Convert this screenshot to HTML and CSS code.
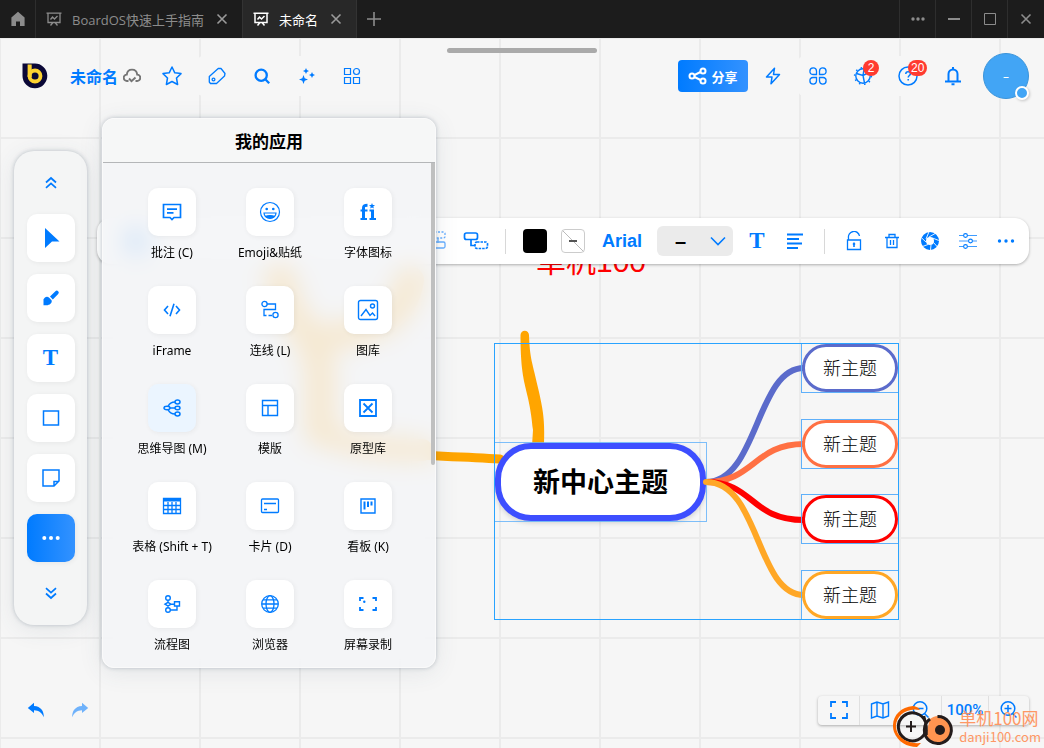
FILE: index.html
```html
<!DOCTYPE html>
<html lang="zh-CN">
<head>
<meta charset="utf-8">
<title>未命名 - BoardOS</title>
<meta name="viewport" content="width=device-width, initial-scale=1">
<link rel="stylesheet" href="styles.css">
</head>
<body>
<div class="app">

  <!-- Free canvas: strokes, mind map, text -->
  <div class="board">
    <svg class="strokes" fill="none" stroke-linecap="round">
      <g class="pen">
        <path d="M345 448C390 456 440 455 500 459" stroke-width="9"/>
        <path d="M410 280C404 318 375 330 326 338" stroke-width="28"/>
        <path d="M280 278C290 335 324 330 320 390V432" stroke-width="30"/>
        <path d="M320 434Q360 450 422 450" stroke-width="22"/>
        <path class="pen-taper" d="M520.500 335C520.500 390 529 385 533 430L532 446H544C545 420 543 410 539 392C532 360 530 360 529 335A4.200 4.200 0 0 0 520.500 335Z"/>
      </g>
      <g class="branches" stroke-width="6">
        <path d="M706 482C758 482 756 368 804 368" stroke="#5b6bcb"/>
        <path d="M706 482C754 482 754 444 804 444" stroke="#ff7043"/>
        <path d="M706 482C754 482 750 520 804 520" stroke="#ff0000"/>
        <path d="M706 482C760 482 756 595 804 595" stroke="#ffa726"/>
      </g>
    </svg>
    <p class="board-text">单机100</p>
    <div class="node node-root">新中心主题</div>
    <div class="node node-child n1">新主题</div>
    <div class="node node-child n2">新主题</div>
    <div class="node node-child n3">新主题</div>
    <div class="node node-child n4">新主题</div>
    <svg class="strokes joint"><circle cx="706" cy="482" r="3" fill="#ffa726"/></svg>
    <div class="selection"></div>
  </div>

  <header class="titlebar">
    <button class="home" aria-label="主页"><svg width="16" height="16" viewBox="0 0 16 16" fill="currentColor"><path d="M8 .8 14.600 6.500V15H10V10.500H6V15H1.400V6.500Z"/></svg></button>
    <div class="tab">
      <button class="tab-name"><svg width="16" height="16" viewBox="0 0 16 16" fill="none" stroke="currentColor" stroke-width="1.300"><path d="M.5 2.200H15.500M2 2.200V11.500H14V2.200M4.500 14.500 7 11.500M11.500 14.500 9 11.500M4.500 8.500 6.500 6 8.500 8 11.500 5"/></svg>BoardOS快速上手指南</button>
      <button class="close" aria-label="关闭"><svg width="12" height="12" viewBox="0 0 12 12" stroke="currentColor" stroke-width="1.600"><path d="M1.500 1.500 10.500 10.500M10.500 1.500 1.500 10.500"/></svg></button>
    </div>
    <div class="tab tab-active">
      <button class="tab-name"><svg width="16" height="16" viewBox="0 0 16 16" fill="none" stroke="currentColor" stroke-width="1.500"><path d="M.5 2.200H15.500M2 2.200V11.500H14V2.200M4.500 14.500 7 11.500M11.500 14.500 9 11.500M4.500 8.500 6.500 6 8.500 8 11.500 5"/></svg>未命名</button>
      <button class="close" aria-label="关闭"><svg width="12" height="12" viewBox="0 0 12 12" stroke="currentColor" stroke-width="1.600"><path d="M1.500 1.500 10.500 10.500M10.500 1.500 1.500 10.500"/></svg></button>
    </div>
    <button class="new-tab" aria-label="新标签页"><svg width="14" height="14" viewBox="0 0 14 14" stroke="currentColor" stroke-width="1.600"><path d="M7 0V14M0 7H14"/></svg></button>
    <div class="window-buttons">
      <button aria-label="更多"><svg width="14" height="4" viewBox="0 0 14 4" fill="currentColor"><circle cx="2" cy="2" r="1.700"/><circle cx="7" cy="2" r="1.700"/><circle cx="12" cy="2" r="1.700"/></svg></button>
      <button aria-label="最小化"><svg width="12" height="2" viewBox="0 0 12 2"><path d="M0 0H12V2H0Z" fill="currentColor"/></svg></button>
      <button aria-label="最大化"><svg width="14" height="14" viewBox="0 0 14 14" fill="none" stroke="currentColor"><path d="M1.500 1.500H12.500V12.500H1.500Z"/></svg></button>
      <button aria-label="关闭窗口"><svg width="12" height="12" viewBox="0 0 12 12" stroke="currentColor" stroke-width="1.600"><path d="M1.500 1.500 10.500 10.500M10.500 1.500 1.500 10.500"/></svg></button>
    </div>
  </header>

  <div class="workspace">
    <div class="drag-handle"></div>

    <!-- Format bar of the selected node -->
    <div class="format-bar">
      <button class="assist" aria-label="智能助手"><svg width="24" height="24" viewBox="0 0 24 24" fill="currentColor"><rect x="1" y="1" width="22" height="22" rx="6"/></svg></button>
      <button class="fade" aria-label="同级主题"><svg width="24" height="20" viewBox="0 0 24 20" fill="none" stroke="currentColor" stroke-width="1.300"><rect x="7" y="1" width="12" height="6" rx="1.500" stroke-dasharray="2 1.500"/><path d="M12 7V12"/><rect x="7" y="11" width="12" height="6" rx="1.500"/></svg></button>
      <button aria-label="子主题"><svg width="26" height="20" viewBox="0 0 26 20" fill="none" stroke="currentColor" stroke-width="1.700"><rect x="1.500" y="2" width="13" height="6.500" rx="2"/><path d="M8 8.500V14.500H12"/><rect x="12" y="11" width="12.500" height="6.500" rx="2" stroke-dasharray="2.500 1"/></svg></button>
      <span class="rule"></span>
      <button aria-label="文字颜色"><span class="swatch swatch-black"></span></button>
      <button aria-label="填充颜色"><span class="swatch swatch-none"></span></button>
      <button class="font-name">Arial</button>
      <span class="size-box"><select aria-label="字号"><option>–</option></select><svg width="16" height="10" viewBox="0 0 16 10" fill="none" stroke="currentColor" stroke-width="1.600"><path d="M1 1.500 8 8.500 15 1.500"/></svg></span>
      <button class="serif-t" aria-label="文字样式">T</button>
      <button aria-label="对齐"><svg width="18" height="16" viewBox="0 0 18 16" stroke="currentColor" stroke-width="1.800"><path d="M1 1.500H17M1 6H13M1 10.500H16M1 15H12"/></svg></button>
      <span class="rule"></span>
      <button aria-label="锁定"><svg width="18" height="20" viewBox="0 0 18 20" fill="none" stroke="currentColor" stroke-width="1.300"><path d="M2.500 9H15.500V18.500H2.500ZM3.500 9V7A5.500 5.500 0 0 1 14.500 5"/><path d="M9 11.500V16M7.800 13H10.200" stroke-width="1.600"/></svg></button>
      <button aria-label="删除"><svg width="16" height="18" viewBox="0 0 16 18" fill="none" stroke="currentColor" stroke-width="1.300"><path d="M1 5.500H15M5 5V2.500H11V5M3 5.500V15.500H13V5.500M6.500 8V13M9.500 8V13"/></svg></button>
      <button aria-label="快照"><svg width="20" height="20" viewBox="0 0 20 20"><circle cx="10" cy="10" r="6.500" fill="none" stroke="currentColor" stroke-width="5"/><path d="M6 8 9 .8M9 6 16 2M12.500 7 18.800 9.500M13.500 11.500 17.500 16M11 14 10.500 19M8 13.500 2.500 15.500M6 11 1.200 6.500" stroke="#fff" stroke-width=".9"/></svg></button>
      <button aria-label="调节"><svg width="18" height="16" viewBox="0 0 18 16" fill="#fff" stroke="currentColor" stroke-width="1.100"><path d="M0 2.500H18M0 8H18M0 13.500H18" opacity=".75"/><circle cx="6.500" cy="2.500" r="1.900"/><circle cx="11.500" cy="8" r="1.900"/><circle cx="6.500" cy="13.500" r="1.900"/></svg></button>
      <button aria-label="更多"><svg width="18" height="4" viewBox="0 0 18 4" fill="currentColor"><circle cx="2.500" cy="2" r="1.700"/><circle cx="9" cy="2" r="1.700"/><circle cx="15.500" cy="2" r="1.700"/></svg></button>
    </div>

    <nav class="topbar">
      <a class="logo" href="#" aria-label="BoardOS"><svg width="26" height="26" viewBox="0 0 26 26"><path d="M.5.5H12.500A12.400 12.400 0 1 1 .5 13Z" fill="#0b0837"/><circle cx="13" cy="13" r="5.500" fill="none" stroke="#fdd231" stroke-width="3.800"/><path d="M5.600 1.500H9.700V14H5.600Z" fill="#fdd231"/></svg></a>
      <button class="doc-name">未命名<svg width="18" height="16" viewBox="0 0 18 16" fill="none" stroke="#757575" stroke-width="1.900"><path d="M5.500 13H4A3.200 3.200 0 0 1 3.800 6.600C4.500 0 13.500 0 14.200 6.600A3.200 3.200 0 0 1 14 13H12.500M6 10.500 8.500 13.200 12.500 9.500"/></svg></button>
      <button class="tool" aria-label="收藏"><svg width="20" height="20" viewBox="0 0 20 20" fill="none" stroke="currentColor" stroke-width="1.500" stroke-linejoin="round"><path d="M10 1 12.800 6.800 19 7.600 14.500 12 15.600 18.500 10 15.500 4.400 18.500 5.500 12 1 7.600 7.200 6.800Z"/></svg></button>
      <button class="tool" aria-label="标签"><svg width="18" height="18" viewBox="0 0 18 18" fill="none" stroke="currentColor" stroke-width="1.300" stroke-linejoin="round"><path d="M10.500 1.300 13 1.500 17 6.500 16.500 9 8.500 16.500H2.500L1.300 15V9.500Z"/><circle cx="5.500" cy="12.500" r="1.400"/></svg></button>
      <button class="tool" aria-label="搜索"><svg width="18" height="18" viewBox="0 0 18 18" fill="none" stroke="currentColor" stroke-width="2.300"><circle cx="8.200" cy="8.200" r="5.600"/><path d="M12.500 12.500 16.200 16.200"/></svg></button>
      <button class="tool" aria-label="智能"><svg width="18" height="18" viewBox="0 0 18 18" fill="currentColor"><path d="M8 1 8.900 3.100 11 4 8.900 4.900 8 7 7.100 4.900 5 4 7.100 3.100ZM14 5 14.900 7.100 17 8 14.900 8.900 14 11 13.100 8.900 11 8 13.100 7.100ZM5.500 8 6.700 11.300 10 12.500 6.700 13.700 5.500 17 4.300 13.700 1 12.500 4.300 11.300Z"/></svg></button>
      <button class="tool" aria-label="组件"><svg width="18" height="18" viewBox="0 0 18 18" fill="none" stroke="currentColor" stroke-width="1.200"><path d="M1.500 1.500H7.500V7.500H1.500ZM1.500 10.500H7.500V16.500H1.500ZM10.500 10.500H16.500V16.500H10.500Z"/><circle cx="13.500" cy="4.500" r="3"/></svg></button>

      <button class="share"><svg width="20" height="18" viewBox="0 0 20 18" fill="none" stroke="currentColor" stroke-width="2"><circle cx="4" cy="9" r="2.500"/><circle cx="15" cy="4" r="2.500"/><circle cx="15" cy="14" r="2.500"/><path d="M6.500 8 12.500 5M6.500 10 12.500 13"/></svg>分享</button>
      <button class="tool" aria-label="闪电"><svg width="16" height="18" viewBox="0 0 16 18" fill="none" stroke="currentColor" stroke-width="1.500" stroke-linejoin="round"><path d="M9.500 1.200 1.500 10H7L6 16.800 14.500 7.500H8.500Z"/></svg></button>
      <button class="tool" aria-label="应用"><svg width="20" height="20" viewBox="0 0 20 20" fill="none" stroke="currentColor" stroke-width="1.300"><path d="M8.500 8.500H5A3.300 3.300 0 1 1 8.500 5ZM11.500 8.500H15A3.300 3.300 0 1 0 11.500 5ZM8.500 11.500H5A3.300 3.300 0 1 0 8.500 15ZM11.500 11.500H15A3.300 3.300 0 1 1 11.500 15Z"/></svg></button>
      <button class="tool" aria-label="任务"><svg width="20" height="20" viewBox="0 0 20 20" fill="none" stroke="currentColor" stroke-width="1.400"><circle cx="10" cy="10" r="7.200"/><circle cx="10" cy="10" r="8.400" stroke-dasharray="1.500 3.780" stroke-width="1.500"/><path d="M3.500 7.500 10 9.500 16 6.500M10 9.500 11.500 17M10 9.500 11 3"/></svg><span class="badge">2</span></button>
      <button class="tool" aria-label="帮助"><svg width="20" height="20" viewBox="0 0 20 20" fill="none" stroke="currentColor" stroke-width="1.500"><circle cx="10" cy="10" r="9"/><path d="M7.800 8C7.800 5 12.400 5.200 12.400 7.800C12.400 9.500 10.200 9.600 10.200 11.600M10.200 13V14.600"/></svg><span class="badge">20</span></button>
      <button class="tool" aria-label="通知"><svg width="18" height="20" viewBox="0 0 18 20" fill="none" stroke="currentColor" stroke-width="2"><path d="M9 1V3M4.500 15V8A4.500 4.500 0 0 1 13.500 8V15M1 15.500H17M7.500 18.200H10.500"/></svg></button>
      <button class="avatar">–<span class="presence"></span></button>
    </nav>

    <main class="middle">
      <aside class="dock">
        <button class="fold" aria-label="向上"><svg width="14" height="14" viewBox="0 0 14 14" fill="none" stroke="currentColor" stroke-width="1.700"><path d="M2 6.500 7 2 12 6.500M2 11.800 7 7.300 12 11.800"/></svg></button>
        <button class="tile" aria-label="选择"><svg width="20" height="22" viewBox="0 0 20 22" fill="currentColor"><path d="M4 1 18.500 14.500H11L4 21Z"/></svg></button>
        <button class="tile" aria-label="画笔"><svg width="18" height="18" viewBox="0 0 18 18" fill="currentColor"><path d="M8 7.600 13.400 2.300A1.900 1.900 0 0 1 16.200 5L10.800 10.400ZM1.500 16.200V12.500A3.600 3.600 0 0 1 7.200 8.700L9.600 11.200C10.500 14 7.500 16.200 4.500 16.200Z"/></svg></button>
        <button class="tile serif-t" aria-label="文字">T</button>
        <button class="tile" aria-label="形状"><svg width="18" height="18" viewBox="0 0 18 18" fill="none" stroke="currentColor" stroke-width="1.500"><path d="M1.500 2H16.500V16H1.500Z"/></svg></button>
        <button class="tile" aria-label="便签"><svg width="18" height="18" viewBox="0 0 18 18" fill="none" stroke="currentColor" stroke-width="1.500"><path d="M1 1H17V12L12 17H1ZM12 17V12.500H17"/></svg></button>
        <button class="tile tile-on" aria-label="更多"><svg width="18" height="4" viewBox="0 0 18 4" fill="currentColor"><circle cx="2.300" cy="2" r="2"/><circle cx="9" cy="2" r="2"/><circle cx="15.700" cy="2" r="2"/></svg></button>
        <button class="fold" aria-label="向下"><svg width="14" height="14" viewBox="0 0 14 14" fill="none" stroke="currentColor" stroke-width="1.700"><path d="M2 2.200 7 6.700 12 2.200M2 7.500 7 12 12 7.500"/></svg></button>
      </aside>

      <section class="panel">
        <h2>我的应用</h2>
        <div class="panel-scrollbar"></div>
        <div class="apps">
          <button class="app-item"><span class="tile"><svg width="20" height="20" viewBox="0 0 20 20" fill="none" stroke="currentColor" stroke-width="1.700"><path d="M1.500 2.500H18.500V15.500H12L10 17.500 8 15.500H1.500ZM5 7.200H15M5 10.800H11.500"/></svg></span>批注 (C)</button>
          <button class="app-item"><span class="tile"><svg width="22" height="22" viewBox="0 0 22 22" fill="none" stroke="currentColor" stroke-width="1.200"><circle cx="11" cy="11" r="9.500"/><circle cx="7.700" cy="8" r=".7" fill="currentColor"/><circle cx="14.300" cy="8" r=".7" fill="currentColor"/><path d="M5 12H17A6 5.500 0 0 1 5 12Z"/><path d="M6.500 15.200Q11 13.800 15.500 15.200Q14 17 11 17T6.500 15.200Z" fill="currentColor"/></svg></span>Emoji&amp;贴纸</button>
          <button class="app-item"><span class="tile"><svg width="18" height="20" viewBox="0 0 18 20" fill="none" stroke="currentColor" stroke-width="3"><path d="M4.500 17V6C4.500 3.500 6 3.300 8.500 3.300M13.500 17V8" /><path d="M1.500 8.500H8.500M1.500 17H8M10.500 8.500H15M10.500 17H17" stroke-width="1.800"/><path d="M13 1 13.800 2.900 16 3.100 14.300 4.500 14.900 6.500 13 5.400 11.200 6.500 11.700 4.500 10 3.100 12.200 2.900Z" fill="currentColor" stroke="none"/></svg></span>字体图标</button>

          <button class="app-item"><span class="tile"><svg width="18" height="14" viewBox="0 0 18 14" fill="none" stroke="currentColor" stroke-width="1.600"><path d="M5 3 1.500 7 5 11M13 3 16.500 7 13 11M11 .8 7 13.200"/></svg></span>iFrame</button>
          <button class="app-item"><span class="tile"><svg width="20" height="20" viewBox="0 0 20 20" fill="none" stroke="currentColor" stroke-width="1.300"><circle cx="4.500" cy="4" r="2.600"/><circle cx="15.500" cy="15" r="2.600"/><path d="M7 4H15.500V9.500H4V14"/><path d="M4 14V15.500H12" stroke-dasharray="4 2"/></svg></span>连线 (L)</button>
          <button class="app-item"><span class="tile"><svg width="22" height="22" viewBox="0 0 22 22" fill="none" stroke="currentColor" stroke-width="1.400"><rect x="1.500" y="1.500" width="19" height="19" rx="2"/><circle cx="15.500" cy="7" r="2"/><path d="M4 17 9 10.500 13 16.500 15.500 14 18 17"/></svg></span>图库</button>

          <button class="app-item"><span class="tile tile-tint"><svg width="20" height="20" viewBox="0 0 20 20" fill="none" stroke="currentColor" stroke-width="1.500"><ellipse cx="5" cy="10" rx="3" ry="1.700"/><ellipse cx="15.500" cy="4" rx="2.500" ry="1.900"/><ellipse cx="15.500" cy="10" rx="2.500" ry="1.700"/><ellipse cx="15.500" cy="16" rx="2.500" ry="1.900"/><path d="M8 10H13M6 8.500Q8 4 13 4M6 11.500Q8 16 13 16"/></svg></span>思维导图 (M)</button>
          <button class="app-item"><span class="tile"><svg width="20" height="20" viewBox="0 0 20 20" fill="none" stroke="currentColor" stroke-width="1.400"><path d="M2.500 2.500H17.500V17.500H2.500ZM2.500 7.500H17.500M8 7.500V17.500"/></svg></span>模版</button>
          <button class="app-item"><span class="tile"><svg width="20" height="20" viewBox="0 0 20 20" fill="none" stroke="currentColor" stroke-width="1.800"><path d="M2 2H18V18H2ZM5.500 5.500 14.500 14.500M14.500 5.500 5.500 14.500"/></svg></span>原型库</button>

          <button class="app-item"><span class="tile"><svg width="20" height="18" viewBox="0 0 20 18" fill="none" stroke="currentColor" stroke-width="1.300"><path d="M1.500 1.500H18.500V16.500H1.500ZM1.500 8.500H18.500M1.500 12.500H18.500M6 5V16M10 5V16M14 5V16"/><path d="M1.500 3H18.500" stroke-width="3"/></svg></span>表格 (Shift + T)</button>
          <button class="app-item"><span class="tile"><svg width="20" height="18" viewBox="0 0 20 18" fill="none" stroke="currentColor" stroke-width="1.300"><rect x="1.500" y="2" width="17" height="13.500" rx="1"/><path d="M4 6.500H16M4 12.500H7"/></svg></span>卡片 (D)</button>
          <button class="app-item"><span class="tile"><svg width="18" height="18" viewBox="0 0 18 18" fill="none" stroke="currentColor" stroke-width="1.400"><path d="M2 2H16V16H2Z"/><path d="M5.500 4.500V12.500M9 4.500V10M12.500 4.500V8.500" stroke-width="2"/></svg></span>看板 (K)</button>

          <button class="app-item"><span class="tile"><svg width="20" height="20" viewBox="0 0 20 20" fill="none" stroke="currentColor" stroke-width="1.400"><circle cx="6" cy="4" r="2.300"/><circle cx="6" cy="16" r="2.300"/><path d="M6 6.300V8.300M6 12V13.700M3 10.200 6 8.300 9 10.200 6 12ZM9 10.200H12.500M12.500 7.800H17.500V12H12.500ZM8.300 16H15V12"/></svg></span>流程图</button>
          <button class="app-item"><span class="tile"><svg width="20" height="20" viewBox="0 0 20 20" fill="none" stroke="currentColor" stroke-width="1.300"><circle cx="10" cy="10" r="8.300"/><ellipse cx="10" cy="10" rx="4" ry="8.300"/><path d="M2 10H18M3 5.800H17M3 14.200H17"/></svg></span>浏览器</button>
          <button class="app-item"><span class="tile"><svg width="20" height="18" viewBox="0 0 20 18" fill="none" stroke="currentColor" stroke-width="1.800"><path d="M2 6V3H5.500M14.500 3H18V6M18 12V15H14.500M5.500 15H2V12"/><circle cx="6.300" cy="6.800" r="1.200" fill="currentColor" stroke="none"/></svg></span>屏幕录制</button>
        </div>
      </section>
    </main>

    <footer class="bottombar">
      <div class="history">
        <button aria-label="撤销"><svg width="18" height="16" viewBox="0 0 18 16" fill="currentColor"><path d="M.8 6 7 .8V4C14 4.500 17 9 16.800 15.200C14.500 10.500 12 8.500 7 8.300V11Z"/></svg></button>
        <button aria-label="重做" disabled><svg width="18" height="16" viewBox="0 0 18 16" fill="currentColor"><path d="M17.200 6 11 .8V4C4 4.500 1 9 1.200 15.200C3.500 10.500 6 8.500 11 8.300V11Z"/></svg></button>
      </div>
      <div class="zoom">
        <button aria-label="全屏"><svg width="20" height="20" viewBox="0 0 20 20" fill="none" stroke="currentColor" stroke-width="1.800"><path d="M2 7V2H7M13 2H18V7M18 13V18H13M7 18H2V13"/></svg></button>
        <button aria-label="地图"><svg width="20" height="20" viewBox="0 0 20 20" fill="none" stroke="currentColor" stroke-width="1.400"><path d="M1.500 4 7 2 13 4 18.500 2V16L13 18 7 16 1.500 18ZM7 2V16M13 4V18"/></svg></button>
        <button aria-label="缩小"><svg width="20" height="20" viewBox="0 0 20 20" fill="none" stroke="currentColor" stroke-width="1.500"><circle cx="9" cy="8.500" r="6.800"/><path d="M5.500 8.500H12.500M13.500 13.500 17.500 17.500"/></svg></button>
        <button class="zoom-level">100%</button>
        <button aria-label="放大"><svg width="20" height="20" viewBox="0 0 20 20" fill="none" stroke="currentColor" stroke-width="1.500"><circle cx="9" cy="8.500" r="6.800"/><path d="M5.500 8.500H12.500M9 5V12M13.500 13.500 17.500 17.500"/></svg></button>
      </div>
    </footer>
  </div>

  <div class="watermark">
    <svg width="64" height="44" viewBox="0 0 64 44" fill="none">
      <path d="M36.500 16C40 11 49 11 54 15C61 21 60 32 53 37C46 42 36 39 33 31" fill="#ff9450"/>
      <path d="M44.500 12.500A13.500 13.500 0 1 1 37 15" stroke="#231c1c" stroke-width="3"/>
      <circle cx="47" cy="26" r="5" fill="#231c1c"/>
      <path d="M32.500 18A14 14 0 1 0 33 26" stroke="#231c1c" stroke-width="3"/>
      <path d="M31 12 33.500 23V31" stroke="#231c1c" stroke-width="2.500"/>
      <path d="M18 17V28M13 22.500H23" stroke="#231c1c" stroke-width="2"/>
      <path d="M20 2C5 3-3 16 1 28C5 38 14 43 24 43L28 39C16 40 6 35 3.500 26C1 15 9 6 22 5.500L27 6C25 3 22 2 20 2Z" fill="#ff6a00"/>
    </svg>
    <div class="watermark-text"><span>单机100网</span><span class="site">danji100.com</span></div>
  </div>
</div>
</body>
</html>
```
FILE: styles.css
```css
* { box-sizing: border-box; }

body {
  margin: 0;
  font-family: "Open Sans", "Noto Sans CJK SC", sans-serif;
  color: #000;
}

button, select {
  margin: 0;
  padding: 0;
  border: 0;
  background: none;
  font: inherit;
  color: inherit;
}

button {
  display: flex;
  align-items: center;
  justify-content: center;
}

svg { display: block; flex: none; }

.app {
  position: relative;
  display: flex;
  flex-direction: column;
  min-height: 100vh;
  overflow: hidden;
}

/* Title bar */
.titlebar {
  position: relative;
  display: flex;
  height: 38px;
  background: #1c1c1c;
  color: #8c8c8c;
  font-size: 13px;
}

.home { width: 36px; border-right: 1px solid #2e2e2e; }

.tab {
  display: flex;
  align-items: center;
  gap: 12px;
  padding: 0 14px 0 10px;
  border-right: 1px solid #333;
}

.tab-name { gap: 10px; }
.tab-active { background: #282828; color: #fff; }
.close { color: #9a9a9a; }
.new-tab { width: 34px; }
.window-buttons { display: flex; margin-left: auto; }
.window-buttons button { width: 36px; border-left: 1px solid #2e2e2e; }
.window-buttons button:last-child { width: 37px; }

/* Canvas */
.board {
  position: absolute;
  inset: 0;
  background-color: #f6f6f6;
  background-image:
    linear-gradient(90deg, #ebebeb 2px, transparent 2px),
    linear-gradient(#ebebeb 2px, transparent 2px);
  background-size: 100px 100px;
  background-position: -1px 0, 0 37px;
}

.strokes { width: 100%; height: 100%; }
.joint { position: absolute; inset: 0; }
.pen { stroke: #ffa500; }
.pen-taper { fill: #ffa500; stroke: none; }

.board-text {
  position: absolute;
  left: 536px;
  top: 240px;
  margin: 0;
  font: 30px/44px "Liberation Sans", "Noto Sans CJK SC", sans-serif;
  color: #f00;
}

.node {
  position: absolute;
  display: flex;
  align-items: center;
  justify-content: center;
  padding-bottom: 3px;
  background: #fff;
  font-family: "Noto Sans CJK SC", sans-serif;
}

.node::after {
  content: "";
  position: absolute;
  border: 1px solid #5fb0fa;
}

.node-root {
  left: 495px;
  top: 443px;
  width: 211px;
  height: 78px;
  border: 6px solid #3d4eff;
  border-radius: 36px;
  box-shadow: 0 2px 5px rgba(0, 0, 0, .15);
  font-size: 27px;
  font-weight: 700;
}

.node-root::after { inset: -7px; opacity: .8; }

.node-child {
  left: 802px;
  width: 96px;
  height: 48px;
  border: 3px solid;
  border-radius: 24px;
  color: #000;
  font-size: 18px;
  font-weight: 300;
}

.node-child::after { inset: -4px; }
.n1 { top: 344px; border-color: #5b6bcb; }
.n2 { top: 420px; border-color: #ff7043; }
.n3 { top: 495px; border-color: #f00; }
.n4 { top: 571px; border-color: #ffa726; }

.selection {
  position: absolute;
  left: 494px;
  top: 343px;
  width: 405px;
  height: 277px;
  border: 1px solid #29a3ff;
}

/* Workspace */
.workspace {
  position: relative;
  display: flex;
  flex: 1;
  flex-direction: column;
  color: #007bff;
}

.drag-handle {
  position: absolute;
  top: 10px;
  left: 50%;
  width: 150px;
  height: 5px;
  margin-left: -75px;
  border-radius: 3px;
  background: #aaa;
}

.topbar {
  display: flex;
  align-items: center;
  gap: 5px;
  height: 76px;
  padding: 0 15px 0 22px;
}

.tool {
  position: relative;
  width: 40px;
  height: 40px;
  border-radius: 6px;
  background: #f6f6f6;
}

.doc-name {
  gap: 5px;
  margin: 0 6px 0 17px;
  font-size: 16px;
  font-weight: 700;
}

.share {
  gap: 3px;
  width: 70px;
  height: 32px;
  margin-left: auto;
  border-radius: 4px;
  background: linear-gradient(90deg, #007bff, #3392ff);
  color: #fff;
  font-size: 13px;
  font-weight: 700;
}

.badge {
  position: absolute;
  top: 4px;
  left: 20px;
  min-width: 16px;
  padding: 0 3px;
  border-radius: 8px;
  background: #ff3b30;
  color: #fff;
  font: 12px/16px "Liberation Sans", sans-serif;
}

.avatar {
  position: relative;
  width: 46px;
  height: 46px;
  margin-left: 5px;
  border: 1px solid #3b94da;
  border-radius: 50%;
  background: #42a5f5;
  color: #fff;
  font-size: 12px;
}

.presence {
  position: absolute;
  right: -1px;
  bottom: -2px;
  width: 14px;
  height: 14px;
  border: 2px solid #fff;
  border-radius: 50%;
  background: #42a5f5;
  box-shadow: 1px 1px 3px rgba(0, 0, 0, .2);
}

/* Format bar */
.format-bar {
  position: absolute;
  top: 180px;
  left: 97px;
  right: 15px;
  display: flex;
  align-items: center;
  justify-content: flex-end;
  height: 46px;
  padding: 0 4px 0 20px;
  border-radius: 14px;
  background: #fff;
  box-shadow: 0 1px 3px rgba(0, 0, 0, .3);
}

.format-bar button { width: 38px; height: 38px; }
.format-bar .assist { margin-right: auto; }
.format-bar .fade { opacity: .6; }
.format-bar .font-name {
  width: 60px;
  font: 700 18px "Liberation Sans", sans-serif;
}

.format-bar .serif-t { margin-left: 5px; }

.rule {
  width: 1px;
  height: 25px;
  margin: 0 10px;
  background: #d8d8d8;
}

.swatch { width: 24px; height: 24px; border-radius: 4px; }
.swatch-black { background: #000; }
.swatch-none {
  border: 1px solid #ccc;
  background:
    linear-gradient(#555, #555) center / 8px 2px no-repeat,
    linear-gradient(to top right, transparent 49%, #bbb 49% 51%, transparent 51%);
}

.size-box {
  position: relative;
  display: flex;
  align-items: center;
  width: 76px;
  height: 30px;
  margin-left: 5px;
  border-radius: 6px;
  background: #ebebeb;
}

.size-box select {
  width: 100%;
  height: 100%;
  padding-left: 18px;
  appearance: none;
  color: #000;
  font: 700 20px "Liberation Sans", sans-serif;
}

.size-box svg { position: absolute; right: 7px; }

.serif-t { font: 700 23px "Liberation Serif", serif; }

/* Middle */
.middle {
  display: flex;
  flex: 1;
  align-items: center;
  gap: 15px;
  padding: 0 15px 0 14px;
}

.dock {
  display: flex;
  flex-direction: column;
  align-items: center;
  gap: 12px;
  width: 73px;
  margin-bottom: 11px;
  padding: 13px 12px;
  border-radius: 20px;
  background: #f4f5f5;
  box-shadow: 0 0 4px rgba(60, 80, 100, .3), 0 4px 24px rgba(60, 80, 100, .1);
}

.fold { width: 48px; height: 38px; }

.tile {
  display: flex;
  align-items: center;
  justify-content: center;
  width: 48px;
  height: 48px;
  border-radius: 10px;
  background: #fff;
  box-shadow: 1px 1px 5px rgba(0, 0, 0, .06);
  color: #007bff;
}

.tile-on { background: linear-gradient(90deg, #007bff, #3392ff); color: #fff; }
.tile-tint { background: #ebf5ff; }

.panel {
  position: relative;
  width: 334px;
  height: 550px;
  overflow: hidden;
  border: 1px solid #fafafa;
  border-radius: 12px;
  background: rgba(243, 244, 247, .85);
  backdrop-filter: blur(12px);
  box-shadow: 0 0 4px rgba(60, 80, 100, .3), 0 4px 24px rgba(60, 80, 100, .1);
  color: #000;
}

.panel h2 {
  height: 44px;
  margin: 0;
  border-bottom: 1px solid #b4b6b8;
  background: #f6f7f7;
  font-size: 17px;
  line-height: 46px;
  text-align: center;
}

.panel-scrollbar {
  position: absolute;
  top: 44px;
  right: 0;
  width: 4px;
  height: 302px;
  border-radius: 0 0 2px 2px;
  background: #bfc0c0;
}

.apps {
  display: grid;
  grid-template-columns: repeat(3, 1fr);
  grid-auto-rows: 98px;
  padding: 25px 18px 0 20px;
}

.app-item {
  flex-direction: column;
  justify-content: flex-start;
  gap: 8px;
  font-family: "Noto Sans", "Noto Sans CJK SC", sans-serif;
  font-size: 12px;
  line-height: 18px;
  white-space: nowrap;
}

/* Bottom */
.bottombar {
  display: flex;
  align-items: center;
  justify-content: space-between;
  height: 76px;
  padding: 0 15px 0 14px;
}

.history { display: flex; }
.history button { width: 44px; height: 44px; }
.history button:disabled { opacity: .55; }

.zoom {
  display: flex;
  height: 29px;
  border-radius: 4px;
  background: #f6f6f6;
  box-shadow: 0 1px 3px rgba(0, 0, 0, .3);
}

.zoom button { width: 41px; }
.zoom button + button { border-left: 1px solid #e0e0e0; }
.zoom .zoom-level {
  width: 47px;
  font-family: Roboto, sans-serif;
  font-size: 15px;
  font-weight: 500;
}

/* Watermark */
.watermark {
  position: absolute;
  right: 3px;
  bottom: 0;
  display: flex;
  align-items: flex-end;
  gap: 2px;
  pointer-events: none;
  color: #ff8e55;
}

.watermark-text {
  display: flex;
  flex-direction: column;
  padding-bottom: 2px;
  font-family: "Noto Sans CJK SC", sans-serif;
  font-size: 17px;
  line-height: 20px;
  opacity: .9;
}

.site { font-size: 13px; line-height: 18px; }
```
